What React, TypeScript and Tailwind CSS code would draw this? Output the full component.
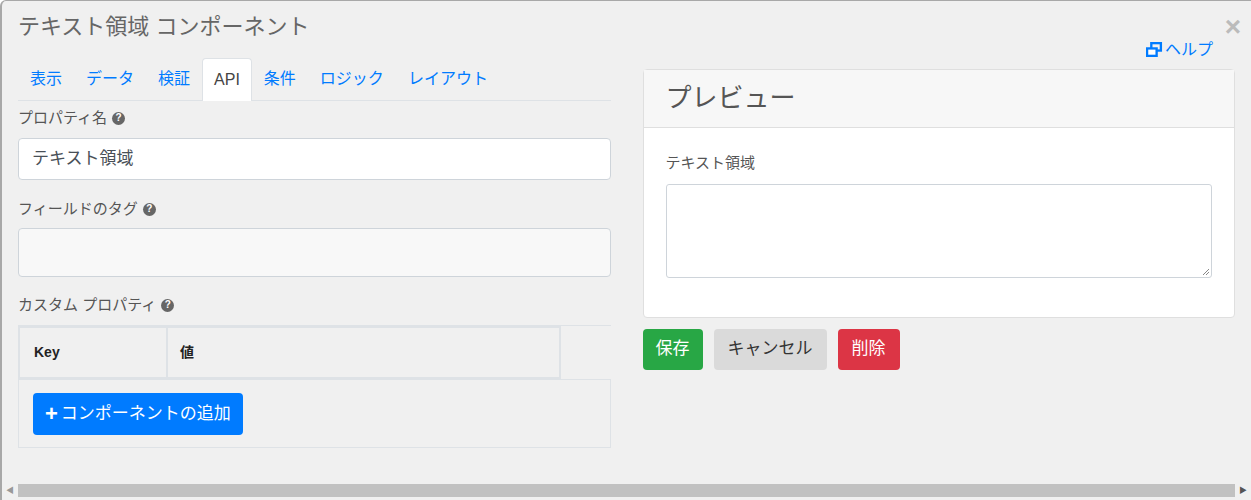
import React from "react";

const Q = () => (
  <span className="inline-flex items-center justify-center w-[13px] h-[13px] rounded-full bg-[#666] text-white text-[10px] font-bold ml-[5px] leading-none">?</span>
);

export default function App() {
  const f = { fontFamily: '"Liberation Sans", "Noto Sans CJK JP", sans-serif' };
  return (
    <div style={f} className="w-[1251px] h-[500px] bg-[#f0f0f0] relative overflow-hidden border-l-2 border-t border-[#a8a8a8] rounded-tl-[6px] text-[#555]">
      <div className="px-[16px] pt-[10px]">
        <div className="text-[22px] text-[#666] h-[36px] leading-[32px]">テキスト領域 コンポーネント</div>
        <div className="flex gap-[32px] mt-[10px]">
          <div className="w-[593px] flex flex-col">
            <div className="flex border-b border-[#dee2e6] h-[44px] items-end text-[16px] text-[#007bff]">
              <div className="px-[12px] h-[42px] leading-[42px]">表示</div>
              <div className="px-[12px] h-[42px] leading-[42px]">データ</div>
              <div className="px-[12px] h-[42px] leading-[42px]">検証</div>
              <div className="px-[11px] h-[43px] leading-[42px] bg-white text-[#444] border border-b-0 border-[#dee2e6] rounded-t-[4px] mb-[-1px]">API</div>
              <div className="px-[12px] h-[42px] leading-[42px]">条件</div>
              <div className="px-[12px] h-[42px] leading-[42px]">ロジック</div>
              <div className="px-[12px] h-[42px] leading-[42px]">レイアウト</div>
            </div>
            <div className="text-[15px] mt-[6px] flex items-center h-[22px]">プロパティ名<Q /></div>
            <div className="mt-[9px] h-[42px] bg-white border border-[#ced4da] rounded-[4px] px-[13px] flex items-center text-[17px] text-[#495057]">テキスト領域</div>
            <div className="text-[15px] mt-[18px] flex items-center h-[22px]">フィールドのタグ<Q /></div>
            <div className="mt-[8px] h-[49px] bg-[#f8f8f8] border border-[#ced4da] rounded-[4px]"></div>
            <div className="text-[15px] mt-[17px] flex items-center h-[22px]">カスタム プロパティ<Q /></div>
            <div className="mt-[9px] border-t border-[#dee2e6]">
              <div className="flex h-[53px] text-[14px] font-bold text-[#222]">
                <div className="w-[149px] border-2 border-r border-[#dee2e6] flex items-center px-[14px]">Key</div>
                <div className="w-[394px] border-2 border-l border-[#dee2e6] flex items-center px-[12px]">値</div>
              </div>
              <div className="border border-[#dee2e6] h-[69px] flex items-center px-[14px]">
                <div className="h-[42px] bg-[#007bff] text-white rounded-[4px] px-[12px] flex items-center text-[17px]">
                  <span className="font-bold text-[22px] mr-[3px] leading-none">+</span>コンポーネントの追加
                </div>
              </div>
            </div>
          </div>
          <div className="w-[593px] flex flex-col mt-[-16px]">
            <div className="flex justify-end h-[17px] text-[16px] text-[#007bff] items-center pr-[22px]">
              <svg width="17" height="15" viewBox="0 0 16 14" className="mr-[2px]"><rect x="5" y="1" width="9" height="7" fill="none" stroke="#007bff" strokeWidth="2.2"/><rect x="1" y="6" width="9" height="7" fill="#fff" stroke="#007bff" strokeWidth="2.2"/></svg>
              ヘルプ
            </div>
            <div className="mt-[11px] bg-white border border-[#dfdfdf] rounded-[4px]">
              <div className="h-[58px] bg-[#f7f7f7] border-b border-[#dfdfdf] flex items-center px-[22px] text-[26px] text-[#555]">プレビュー</div>
              <div className="px-[22px] pt-[24px] pb-[39px]">
                <div className="text-[15px] text-[#555]">テキスト領域</div>
                <div className="mt-[9px] h-[94px] border border-[#ced4da] rounded-[3px] relative">
                  <svg className="absolute right-[1px] bottom-[1px]" width="9" height="9" viewBox="0 0 9 9"><path d="M8 2L2 8M8 5L5 8" stroke="#888" strokeWidth="1"/></svg>
                </div>
              </div>
            </div>
            <div className="flex gap-[11px] mt-[11px] text-[17px]">
              <div className="h-[41px] px-[13px] bg-[#28a745] text-white rounded-[4px] flex items-center">保存</div>
              <div className="h-[41px] px-[14px] bg-[#dadada] text-[#333] rounded-[4px] flex items-center">キャンセル</div>
              <div className="h-[41px] px-[14px] bg-[#dc3545] text-white rounded-[4px] flex items-center">削除</div>
            </div>
          </div>
        </div>
      </div>
      <div className="absolute right-[10px] top-[12px] text-[28px] text-[#bbb] font-bold leading-none">×</div>
      <div className="absolute left-0 right-0 bottom-[2px] h-[15px] bg-[#f0f0f0] flex items-center">
        <span className="text-[8px] text-[#999] w-[16px] text-center">◀</span>
        <div className="flex-1 h-[13px] bg-[#c1c1c1]"></div>
        <span className="text-[8px] text-[#555] w-[16px] text-center">▶</span>
      </div>
    </div>
  );
}
